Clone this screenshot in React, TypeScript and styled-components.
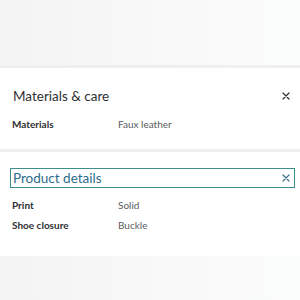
import React from "react";
import styled, { createGlobalStyle } from "styled-components";

const Global = createGlobalStyle`
  html, body {
    margin: 0;
    padding: 0;
    background: #ffffff;
    font-family: Lato, "Open Sans", sans-serif;
    color: #2e2f32;
  }
`;

const Page = styled.div`
  width: 300px;
  height: 300px;
  display: flex;
  flex-direction: column;
  overflow: hidden;
  background: #f1f1f2;
`;

const Band = styled.div<{ $h: number }>`
  height: ${(p) => p.$h}px;
  flex: none;
  background: linear-gradient(90deg, #f3f3f3 0%, #f8f8f8 45%, #fbfcfc 100%);
`;

const Section = styled.section<{ $h: number; $top: number }>`
  height: ${(p) => p.$h}px;
  flex: none;
  box-sizing: border-box;
  padding: ${(p) => p.$top}px 5px 0 10px;
  background: #ffffff;
  display: flex;
  flex-direction: column;
`;

const Header = styled.div<{ $focused?: boolean }>`
  display: flex;
  align-items: center;
  justify-content: space-between;
  box-sizing: border-box;
  height: 20px;
  padding: 0 4px 0 2px;
  border: 1.5px solid ${(p) => (p.$focused ? "#3c8f8b" : "transparent")};
`;

const Title = styled.h3<{ $focused?: boolean }>`
  margin: 0;
  font-size: 13.5px;
  font-weight: 400;
  color: ${(p) => (p.$focused ? "#2c6c8c" : "#2e2f32")};
`;

const Close = styled.button<{ $focused?: boolean }>`
  border: 0;
  background: none;
  padding: 0;
  width: 8px;
  height: 8px;
  display: flex;
  color: ${(p) => (p.$focused ? "#3b6f86" : "#2e2f32")};
`;

const Rows = styled.dl<{ $top: number }>`
  margin: ${(p) => p.$top}px 0 0 0;
  display: grid;
  grid-template-columns: 106px 1fr;
  row-gap: 8px;
  padding-left: 2px;
  font-size: 10px;
  line-height: 12px;
`;

const Term = styled.dt`
  font-weight: 700;
  color: #2e2f32;
`;

const Value = styled.dd`
  margin: 0;
  color: #5a5b5e;
`;

const Gap = styled.div`
  height: 3px;
  flex: none;
  background: #efefef;
`;

function X() {
  return (
    <svg width="8" height="8" viewBox="0 0 8 8">
      <path d="M1 1 L7 7 M7 1 L1 7" stroke="currentColor" strokeWidth="1.2" strokeLinecap="round" />
    </svg>
  );
}

export default function App() {
  return (
    <Page>
      <Global />
      <Band $h={65} />
      <Gap />
      <Section $h={81} $top={18}>
        <Header>
          <Title>Materials &amp; care</Title>
          <Close aria-label="close">
            <X />
          </Close>
        </Header>
        <Rows $top={12}>
          <Term>Materials</Term>
          <Value>Faux leather</Value>
        </Rows>
      </Section>
      <Gap />
      <Section $h={104} $top={16}>
        <Header $focused>
          <Title $focused>Product details</Title>
          <Close $focused aria-label="close">
            <X />
          </Close>
        </Header>
        <Rows $top={11}>
          <Term>Print</Term>
          <Value>Solid</Value>
          <Term>Shoe closure</Term>
          <Value>Buckle</Value>
        </Rows>
      </Section>
      <Band $h={44} />
    </Page>
  );
}
